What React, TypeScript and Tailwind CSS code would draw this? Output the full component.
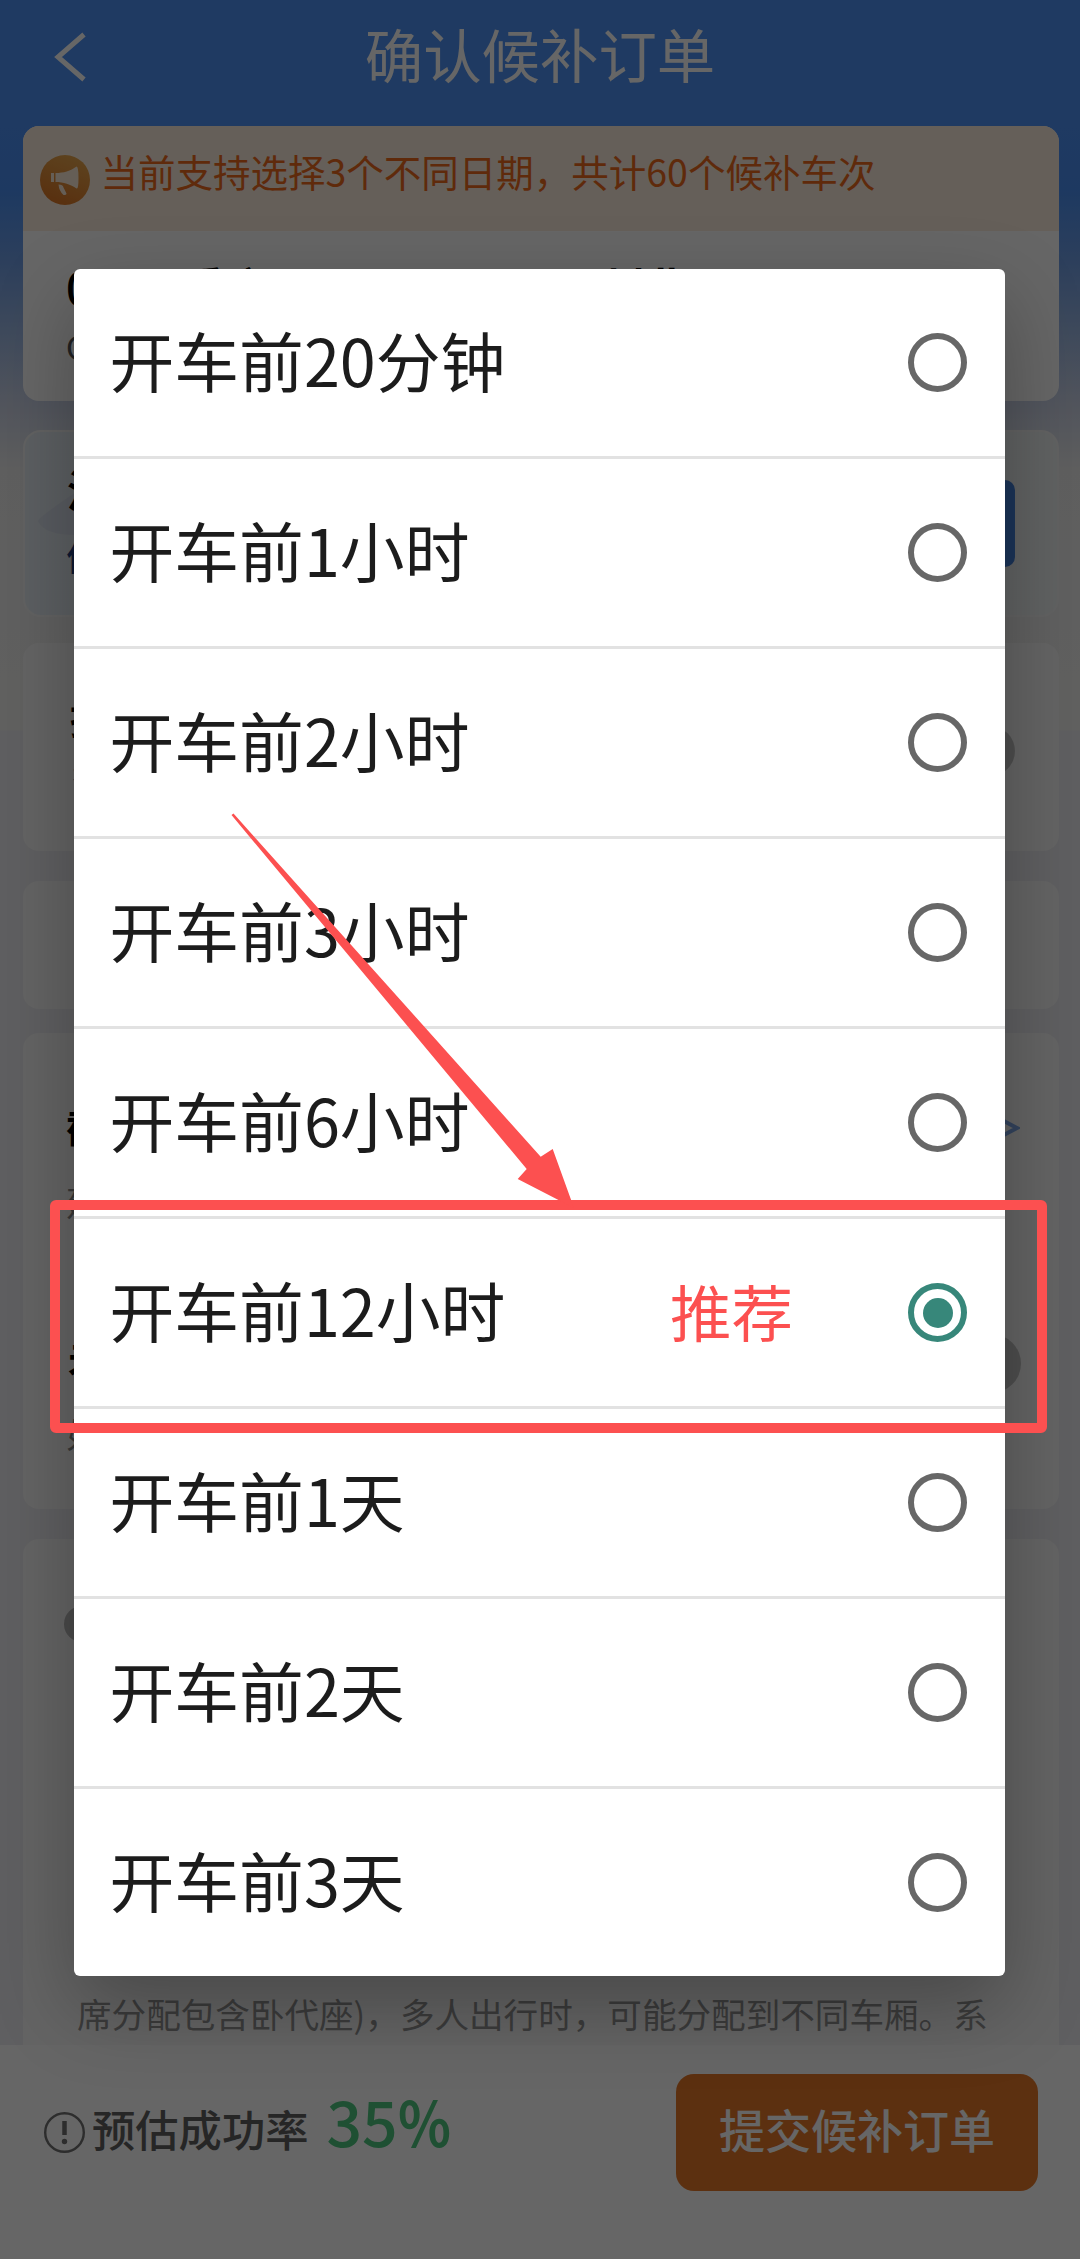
const options = [
  "开车前20分钟",
  "开车前1小时",
  "开车前2小时",
  "开车前3小时",
  "开车前6小时",
  "开车前12小时",
  "开车前1天",
  "开车前2天",
  "开车前3天",
];

const SELECTED = 5;

function Header() {
  return (
    <header className="grid h-[126px] shrink-0 grid-cols-[120px_1fr_120px] text-white">
      <svg className="mt-[31px] ml-[52px] h-[52px] w-[36px]" viewBox="0 0 36 52" fill="none" stroke="currentColor" strokeWidth="5">
        <path d="M32 3.5 6 26 32 48.5" />
      </svg>
      <h1 className="mt-[9px] text-center text-[58.400px] leading-[87px]">确认候补订单</h1>
    </header>
  );
}

function Notice() {
  return (
    <div className="flex h-[105px] bg-[#fceedf] pt-[29px] pl-[17px]">
      <svg className="size-[50px]" viewBox="0 0 50 50">
        <defs>
          <linearGradient id="horn" x1="0.3" y1="1" x2="0.7" y2="0">
            <stop offset="0" stopColor="#dd7625" />
            <stop offset="1" stopColor="#e8a74e" />
          </linearGradient>
        </defs>
        <circle cx="25" cy="25" r="25" fill="url(#horn)" />
        <path d="M15.500 18c8 0 15-2 21-6.500q2 0 2 11.500t-2 10.500c-6-4-13-6.500-21-6.500z" fill="#fcecd8" />
        <path d="M11 18h3v9h-3z" fill="#fcecd8" />
        <path d="M18.500 29.500q4.500 0 5 3l3 6q0 1.500-3 1.500-4.500-4-5-10.500" fill="#fcecd8" />
      </svg>
      <p className="-mt-[12px] ml-[10.500px] text-[37.500px] leading-[56px] text-[#ee6a1c]">
        当前支持选择3个不同日期，共计60个候补车次
      </p>
    </div>
  );
}

function TripCard() {
  return (
    <section className="h-[275px] shrink-0 overflow-hidden rounded-[16px] bg-white">
      <Notice />
      <div className="mt-[25px] flex pl-[43px] text-[44px] leading-[60px] font-medium text-black">
        <span className="w-[435px]">08-01重庆</span>
        <span className="w-[100px]">G1</span>
        <span className="font-bold">州北</span>
      </div>
      <p className="pl-[43px] text-[32px] leading-[60px] text-[#555]">G1</p>
    </section>
  );
}

function MemberCard() {
  return (
    <section className="relative mt-[29px] flex h-[187px] shrink-0 justify-between overflow-hidden rounded-[18px] border-2 border-[#f4f5f6] bg-linear-to-r from-[#e6eef4] to-[#f1f4f6]">
      <svg className="absolute top-[60px] left-[11px] h-[72px] w-[120px]" viewBox="0 0 120 72" fill="#dde3f0">
        <path d="M2 29Q3 25 40 0V43Q8 43 2 29" />
      </svg>
      <div className="relative pt-[24px] pl-[42px]">
        <p className="text-[44px] leading-[66px] font-bold text-black">温</p>
        <p className="-ml-[1px] text-[36px] leading-[66px] font-medium text-[#243f80]">优</p>
      </div>
      <button className="mt-[48px] mr-[42px] h-[87px] w-[180px] rounded-[10px] bg-[#4582dc]" />
    </section>
  );
}

function Cards() {
  return (
    <main className="flex flex-1 flex-col pr-[21px] pl-[23px]">
      <TripCard />
      <MemberCard />
      <section className="mt-[26px] flex h-[208px] shrink-0 justify-between rounded-[16px] bg-[#fafafa]">
        <div className="pt-[44px] pl-[47px]">
          <p className="text-[40px] leading-[60px] font-bold text-black">接</p>
          <p className="pl-[2px] text-[34px] leading-[66px] text-[#4a7fb8]">查</p>
        </div>
        <span className="mt-[83px] mr-[44px] h-[50px] w-[90px] rounded-full bg-[#c4c4c4]" />
      </section>
      <section className="mt-[30px] h-[128px] shrink-0 rounded-[16px] bg-[#fafafa]" />
      <section className="mt-[24px] h-[476px] shrink-0 rounded-[16px] bg-[#fafafa]">
        <div className="flex h-[210px] justify-between pt-[60px] pl-[43px]">
          <div>
            <p className="text-[40px] leading-[66px] font-bold text-black">截</p>
            <p className="mt-[18px] text-[34px] leading-[50px] text-[#8a8a8a]">建</p>
          </div>
          <svg className="mt-[24px] mr-[39px] h-[22px] w-[24px]" viewBox="0 0 24 22" fill="none" stroke="#7fa9e8" strokeWidth="4">
            <path d="M4 2 21 11 4 20" />
          </svg>
        </div>
        <div className="flex h-[210px] justify-between pt-[80px] pl-[43px]">
          <div>
            <p className="pl-[2px] text-[40px] leading-[66px] font-bold text-black">未</p>
            <p className="mt-[20px] text-[34px] leading-[50px] text-[#8a8a8a]">如</p>
          </div>
          <span className="mt-[11px] mr-[38px] h-[59px] w-[104px] rounded-full bg-[#c4c4c4]" />
        </div>
      </section>
      <section className="mt-[30px] flex-1 rounded-t-[16px] bg-[#fafafa] pt-[67px]">
        <span className="ml-[41px] block size-[36px] rounded-full bg-[#b8b8b8]" />
        <p className="mt-[345px] pl-[54px] text-[34.600px] leading-[52px] whitespace-nowrap text-[#939393]">
          席分配包含卧代座)，多人出行时，可能分配到不同车厢。系
        </p>
      </section>
    </main>
  );
}

function BottomBar() {
  return (
    <footer className="flex h-[214px] shrink-0 items-start justify-between bg-white pr-[42px] pl-[44px]">
      <div className="flex">
        <svg className="mt-[67px] size-[41px]" viewBox="0 0 41 41" fill="none" stroke="#707070">
          <circle cx="20.500" cy="20.500" r="19.300" strokeWidth="2.400" />
          <path d="M20.500 9v14" strokeWidth="4.500" />
          <circle cx="20.500" cy="29.500" r="2.700" fill="#707070" stroke="none" />
        </svg>
        <span className="mt-[51px] ml-[7px] text-[43.300px] leading-[65px] font-medium text-[#5f5f5f]">预估成功率</span>
        <span className="mt-[28px] ml-[18px] flex text-[62.500px] leading-[93px] font-medium text-[#4fc880]">
          35<span className="origin-left scale-x-[0.88] font-bold">%</span>
        </span>
      </div>
      <button className="mt-[29px] h-[117px] w-[362px] rounded-[18px] bg-[#e6782a] pb-[9px] text-[46px] font-medium text-white">
        提交候补订单
      </button>
    </footer>
  );
}

function Radio({ checked }: { checked: boolean }) {
  return checked ? (
    <span className="flex size-[59px] items-center justify-center rounded-full border-[6px] border-[#37877a]">
      <span className="size-[30px] rounded-full bg-[#37877a]" />
    </span>
  ) : (
    <span className="size-[59px] rounded-full border-[6px] border-[#676767]" />
  );
}

function OptionDialog() {
  return (
    <ul className="mx-[74px] mt-[269px] w-[931px] overflow-hidden rounded-[6px] bg-white shadow-[0_30px_80px_rgba(0,0,0,0.28)]">
      {options.map((label, i) => (
        <li key={label} className="flex h-[190px] items-center border-b-[3px] border-[#e2e2e2] pr-[38px] pl-[35.500px] last:h-[187px] last:border-b-0">
          <span className="flex-1 pb-[7px] text-[64.800px] leading-[96px] text-[#1c1c1c]">{label}</span>
          {i === SELECTED && <span className="mr-[115px] pb-[4px] text-[61.500px] leading-[90px] text-[#fc5050]">推荐</span>}
          <Radio checked={i === SELECTED} />
        </li>
      ))}
    </ul>
  );
}

function Annotation() {
  return (
    <>
      <div className="absolute top-[1200px] left-[50px] h-[233px] w-[997px] rounded-[6px] border-[10px] border-[#fc5050]" />
      <svg className="absolute top-[810px] left-[228px] h-[400px] w-[350px]" viewBox="228 810 350 400" fill="#fc5050">
        <path d="M231.500 815 233.500 813.500 540.700 1156.700 552.700 1149 574 1208 517.700 1179 526.700 1169z" />
      </svg>
    </>
  );
}

export default function App() {
  return (
    <div className="relative h-[2259px] w-[1080px] overflow-hidden bg-[#eeeef2] [font-family:'Noto_Sans_CJK_SC','Noto_Sans',sans-serif]">
      <div className="flex h-full flex-col bg-[linear-gradient(180deg,#4e91f5_0px,#4e91f5_126px,#4a8ff2_190px,#6f9ee6_260px,#cad3e8_400px,#eeeeee_470px,#f3f3f1_730px,transparent_731px)]">
        <Header />
        <Cards />
        <BottomBar />
      </div>
      <div className="absolute inset-0 bg-black/60">
        <OptionDialog />
      </div>
      <Annotation />
    </div>
  );
}
